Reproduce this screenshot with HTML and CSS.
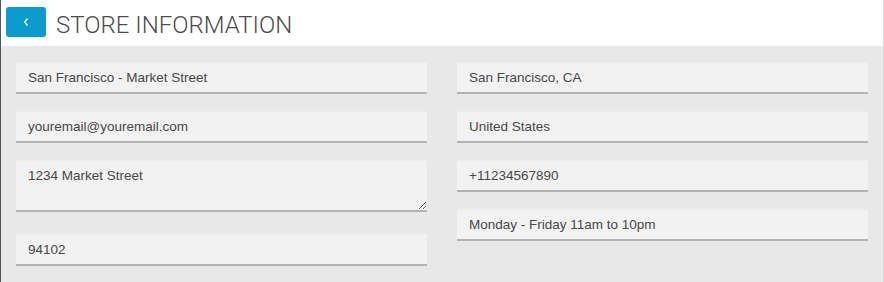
FILE: index.html
```html
<!DOCTYPE html>
<html lang="en">
<head>
    <meta charset="UTF-8">
    <title>Store Information</title>
    <link rel="stylesheet" href="styles.css">
</head>
<body>
<div class="header">
    <div class="back">
        <svg width="8" height="10" viewBox="0 0 8 10"><polyline points="5.5,1.5 2.5,5 5.5,8.5" fill="none" stroke="#fff" stroke-width="1.3"/></svg>
    </div>
    <h1>STORE INFORMATION</h1>
</div>
<div class="form">
    <div class="col">
        <input class="field" type="text" value="San Francisco - Market Street">
        <input class="field" type="text" value="youremail@youremail.com">
        <textarea class="field area">1234 Market Street</textarea>
        <input class="field" type="text" value="94102">
    </div>
    <div class="col">
        <input class="field" type="text" value="San Francisco, CA">
        <input class="field" type="text" value="United States">
        <input class="field" type="text" value="+11234567890">
        <input class="field" type="text" value="Monday - Friday 11am to 10pm">
    </div>
</div>
</body>
</html>
```
FILE: styles.css
```css
*{margin: 0; padding: 0; box-sizing: border-box}
html, body {
    height: 100%;
}
body {
    background: #e8e8e9;
    border-left: 1px solid #555555;
    border-right: 1px solid #d6d6d6;
    font-family: "Liberation Sans", Arial, sans-serif;
}
/* Top bar */
.header {
    height: 46px;
    background: #ffffff;
    display: flex;
    align-items: flex-start;
    padding: 7px 0 0 5px;
}
.back {
    width: 40px;
    height: 30px;
    border-radius: 3px;
    background: #0b9bcc;
    display: flex;
    align-items: center;
    justify-content: center;
}
.header h1 {
    margin-left: 10px;
    padding-top: 2px;
    font-family: Roboto, "Liberation Sans", sans-serif;
    font-weight: 300;
    font-size: 24px;
    line-height: 32px;
    color: #4c4c4c;
}
/* Fields */
.form {
    display: flex;
    gap: 30px;
    padding: 16px 15px 0 15px;
}
.col {
    width: 411px;
    display: flex;
    flex-direction: column;
    gap: 17px;
}
.field {
    display: block;
    width: 100%;
    height: 32px;
    padding: 0 12px;
    background: #f2f2f2;
    border: none;
    border-top: 1px solid #ececec;
    border-bottom: 2px solid #b3b3b3;
    font-family: "Liberation Sans", Arial, sans-serif;
    font-size: 13.5px;
    color: #484848;
    outline: none;
}
.area {
    height: 52px;
    padding: 7px 12px;
    margin-bottom: 5px;
    resize: vertical;
}
```
